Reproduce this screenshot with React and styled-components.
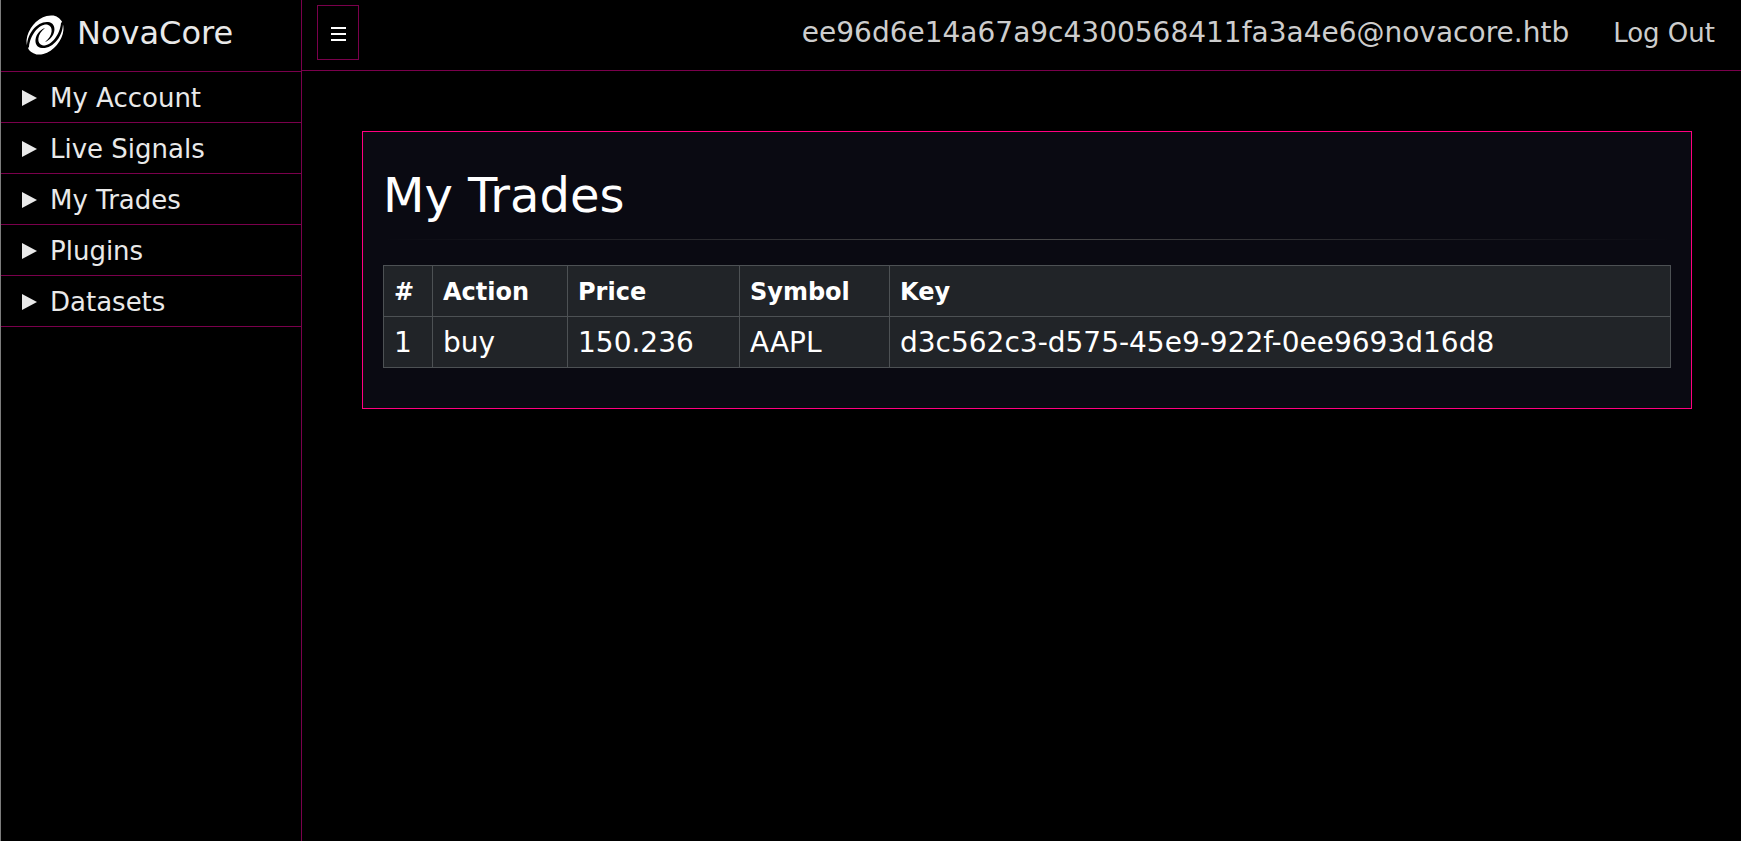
import React from "react";
import styled, { createGlobalStyle } from "styled-components";

const GlobalStyle = createGlobalStyle`
  *, *::before, *::after { box-sizing: border-box; }
  body {
    margin: 0;
    background: #000;
    color: #fff;
    font-family: "DejaVu Sans", sans-serif;
    font-size: 28px;
    line-height: 32px;
  }
`;

const Page = styled.div`
  display: flex;
  min-height: 100vh;
  border-left: 1px solid #7c7c7c;
`;

const Sidebar = styled.aside`
  flex: 0 0 301px;
  border-right: 1px solid #7a004c;
`;

const Brand = styled.a`
  display: flex;
  align-items: center;
  gap: 12px;
  height: 72px;
  padding: 0 24px 2px;
  border-bottom: 1px solid #7a004c;
  color: #e9e9e9;
  font-size: 32px;
  text-decoration: none;
`;

const BrandName = styled.span`
  padding-bottom: 4px;
`;

const NavItem = styled.a`
  display: flex;
  align-items: center;
  gap: 12px;
  height: 51px;
  padding: 2px 20px 0;
  border-bottom: 1px solid #7a004c;
  color: #e9e9e9;
  font-size: 26px;
  text-decoration: none;
  white-space: nowrap;
`;

const Content = styled.div`
  flex: 1;
  min-width: 0;
`;

const TopBar = styled.header`
  display: flex;
  align-items: center;
  justify-content: space-between;
  height: 71px;
  padding: 0 26px 6px 15px;
  border-bottom: 1px solid #7a004c;
`;

const MenuButton = styled.button`
  display: grid;
  place-items: center;
  width: 42px;
  height: 55px;
  padding: 4px 0 0 2px;
  background: transparent;
  border: 1px solid #7a004c;
  color: #fff;
`;

const UserLinks = styled.nav`
  display: flex;
  align-items: baseline;
  gap: 44px;
  padding-top: 2px;
`;

const UserLink = styled.a`
  color: #cdcdcd;
  font-size: ${(p) => (p.$compact ? "26px" : "28px")};
  text-decoration: none;
`;

const Card = styled.main`
  margin: 60px 49px 60px 60px;
  padding: 40px 20px;
  background: #0a0a12;
  border: 1px solid #ff0080;
`;

const Title = styled.h1`
  margin: 0 0 20px;
  font-size: 48px;
  font-weight: 400;
  line-height: 47px;
`;

const Divider = styled.hr`
  height: 1px;
  margin: 0 0 25px;
  border: 0;
  background: linear-gradient(to right, transparent, #4a4a4a, transparent);
`;

const TradesTable = styled.table`
  width: 100%;
  table-layout: fixed;
  border-collapse: collapse;
  background: #212428;
`;

const Col = styled.col`
  width: ${(p) => p.$width};
`;

const HeadCell = styled.th`
  height: 51px;
  padding: 2px 10px 0;
  border: 1px solid #4d5154;
  font-size: 24px;
  text-align: left;
`;

const Cell = styled.td`
  height: 51px;
  padding: 2px 10px 0;
  border: 1px solid #4d5154;
`;

const spiralArm =
  "M2 34C1 18 13 6 23 7C33 8 31 23 20 27C28 21 29 11 22 9.5C14 9 5 20 4 32Z";

const Logo = () => (
  <svg width="40" height="40" viewBox="0 0 40 40" aria-hidden="true">
    <ellipse cx="20" cy="20" rx="22" ry="15.5" fill="#fff" transform="rotate(-50 20 20)" />
    <path d={spiralArm} />
    <path d={spiralArm} transform="rotate(180 20 20)" />
  </svg>
);

const Arrow = () => (
  <svg width="17" height="16" viewBox="0 0 17 16" aria-hidden="true">
    <path d="M1 0L16 8L1 16Z" fill="#e9e9e9" />
  </svg>
);

const MenuIcon = () => (
  <svg width="16" height="16" viewBox="0 0 16 16" aria-hidden="true">
    <path d="M0 2H15M0 8H15M0 14H15" stroke="#fff" strokeWidth="2" />
  </svg>
);

const sections = ["My Account", "Live Signals", "My Trades", "Plugins", "Datasets"];
const columns = [
  ["#", "49px"],
  ["Action", "135px"],
  ["Price", "172px"],
  ["Symbol", "150px"],
  ["Key", "auto"],
];
const trades = [["1", "buy", "150.236", "AAPL", "d3c562c3-d575-45e9-922f-0ee9693d16d8"]];

export default function App() {
  return (
    <>
      <GlobalStyle />
      <Page>
        <Sidebar>
          <Brand href="#"><Logo /><BrandName>NovaCore</BrandName></Brand>
          <nav>
            {sections.map((s) => (
              <NavItem href="#" key={s}><Arrow />{s}</NavItem>
            ))}
          </nav>
        </Sidebar>
        <Content>
          <TopBar>
            <MenuButton type="button" aria-label="Toggle menu"><MenuIcon /></MenuButton>
            <UserLinks>
              <UserLink href="#">ee96d6e14a67a9c4300568411fa3a4e6@novacore.htb</UserLink>
              <UserLink href="#" $compact>Log Out</UserLink>
            </UserLinks>
          </TopBar>
          <Card>
            <Title>My Trades</Title>
            <Divider />
            <TradesTable>
              <colgroup>
                {columns.map(([name, width]) => <Col key={name} $width={width} />)}
              </colgroup>
              <thead>
                <tr>{columns.map(([name]) => <HeadCell scope="col" key={name}>{name}</HeadCell>)}</tr>
              </thead>
              <tbody>
                {trades.map((row) => (
                  <tr key={row[4]}>{row.map((v) => <Cell key={v}>{v}</Cell>)}</tr>
                ))}
              </tbody>
            </TradesTable>
          </Card>
        </Content>
      </Page>
    </>
  );
}
